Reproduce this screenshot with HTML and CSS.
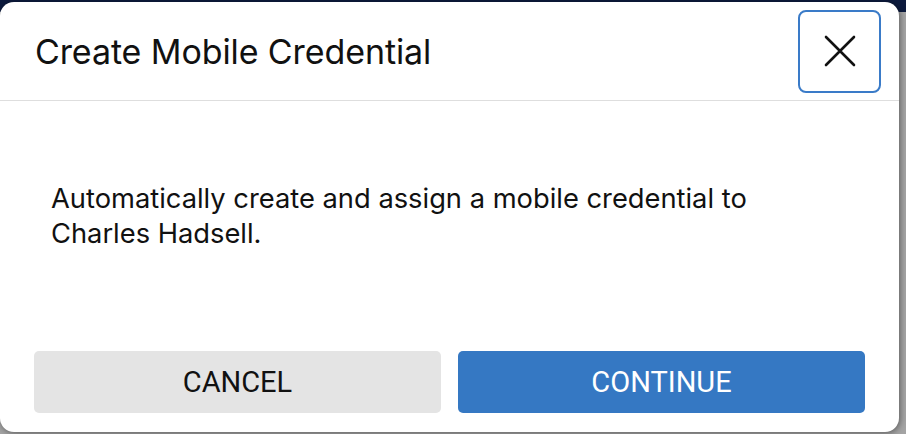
FILE: index.html
```html
<!DOCTYPE html>
<html>
<head>
<meta charset="utf-8">
<link rel="stylesheet" href="styles.css">
</head>
<body>
<div class="modal">
  <div class="modal-header">
    <h1 class="title">Create Mobile Credential</h1>
    <button class="close" aria-label="Close">
      <svg width="32" height="32" viewBox="0 0 32 32"><path d="M2 2 L30 30 M30 2 L2 30" stroke="#111" stroke-width="2.6" stroke-linecap="round" fill="none"/></svg>
    </button>
  </div>
  <div class="modal-body">
    <p class="msg">Automatically create and assign a mobile credential to<br>Charles Hadsell.</p>
  </div>
  <div class="modal-footer">
    <button class="btn btn-cancel">CANCEL</button>
    <button class="btn btn-continue">CONTINUE</button>
  </div>
</div>
</body>
</html>
```
FILE: styles.css
```css
html, body { margin: 0; padding: 0; }
body {
  width: 906px;
  height: 434px;
  overflow: hidden;
  background: linear-gradient(#0c1a3d 0 12px, #a4a4a4 12px);
  padding-top: 2px;
  box-sizing: border-box;
  font-family: Inter, "Liberation Sans", sans-serif;
}
.modal {
  width: 899px;
  height: 430px;
  background: #fff;
  border-radius: 14px;
  box-shadow: 1px 1px 6px rgba(0,0,0,0.45);
  display: flex;
  flex-direction: column;
  box-sizing: border-box;
}
.modal-header {
  height: 99px;
  border-bottom: 1px solid #dedede;
  display: flex;
  align-items: center;
  justify-content: space-between;
  padding: 0 18px 0 35px;
  box-sizing: border-box;
}
.title {
  margin: 0;
  font-weight: 400;
  font-size: 34px;
  color: #111;
  letter-spacing: -0.1px;
}
.close {
  width: 83px;
  height: 83px;
  border: 2px solid #3a7bc8;
  border-radius: 8px;
  background: #fff;
  display: flex;
  align-items: center;
  justify-content: center;
  padding: 0;
}
.modal-body {
  flex: 1;
  padding: 80px 51px 0;
}
.msg {
  margin: 0;
  font-size: 27.3px;
  line-height: 35px;
  color: #111;
}
.modal-footer {
  display: flex;
  gap: 17px;
  padding: 0 34px 19px;
}
.btn {
  flex: 1;
  height: 62px;
  border: none;
  border-radius: 5px;
  font-family: Roboto, "Liberation Sans", sans-serif;
  font-size: 29px;
  padding: 0;
}
.btn-cancel { background: #e4e4e4; color: #111; }
.btn-continue { background: #3578c3; color: #fff; }
```
